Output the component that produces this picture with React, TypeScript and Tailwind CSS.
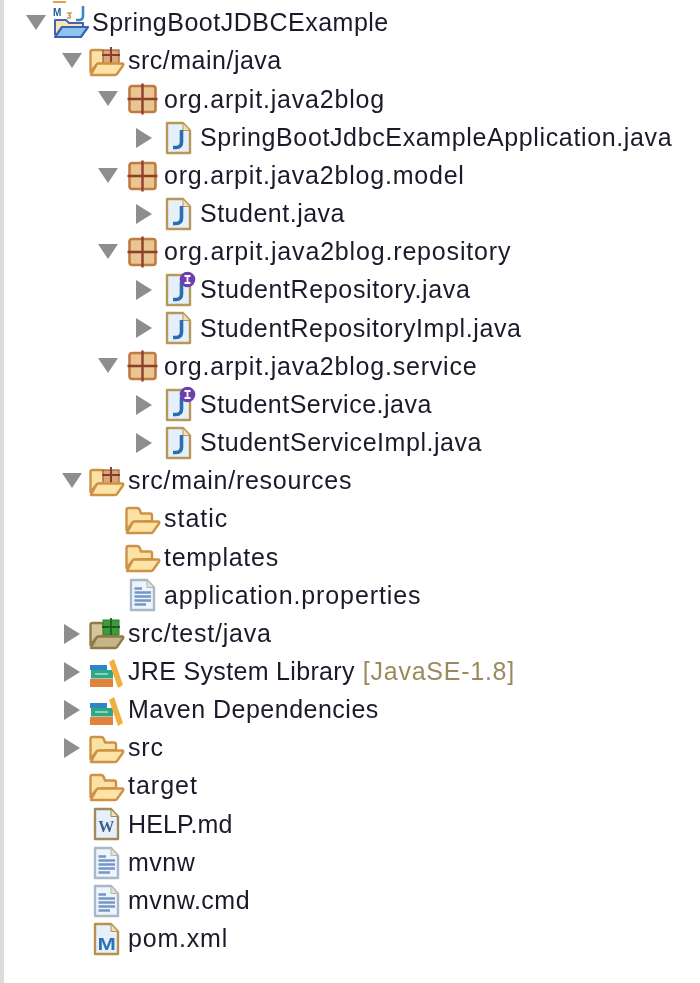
import React from "react";

const backPath = "M1.5 29 V9 Q1.5 7 3.5 7 H12 Q14 7 15 9.5 L16 12.5 H25 Q27 12.5 27 14.5 V20";
const frontPath = "M2 31.5 L8 21 Q8.5 20.5 10 20.5 H33 Q35 20.5 34 22.5 L28 31 Q27.5 32 26 32 H3 Q1.5 32 2 31.5 Z";

const FolderIcon = () => (
  <svg width="36" height="36" viewBox="0 0 36 36">
    <path d={backPath + " L8 21 L1.5 29 Z"} fill="#fbe1a4" stroke="#cd9246" strokeWidth="2.4" strokeLinejoin="round" />
    <path d={frontPath} fill="#fde3a6" stroke="#cd9246" strokeWidth="2.4" strokeLinejoin="round" />
  </svg>
);

const SourceFolder = () => (
  <svg width="36" height="36" viewBox="0 0 36 36">
    <path d={backPath + " L8 21 L1.5 29 Z"} fill="#fbe1a4" stroke="#cd9246" strokeWidth="2.4" strokeLinejoin="round" />
    <rect x="14" y="7" width="16" height="14" fill="#d9a878" stroke="#a5593a" strokeWidth="1.2" />
    <path d="M22 4 V20 M13 12 H31" stroke="#8a3b2a" strokeWidth="2" />
    <path d={frontPath} fill="#fde3a6" stroke="#cd9246" strokeWidth="2.4" strokeLinejoin="round" />
  </svg>
);

const TestFolder = () => (
  <svg width="36" height="36" viewBox="0 0 36 36">
    <path d={backPath + " L8 21 L1.5 29 Z"} fill="#d6c59a" stroke="#8f7a4a" strokeWidth="2.4" strokeLinejoin="round" />
    <rect x="14" y="4" width="16" height="15" fill="#3f9a3c" stroke="#2c7a2c" strokeWidth="1" />
    <path d="M22 2 V19 M13 11 H31" stroke="#1e5c24" strokeWidth="1.8" />
    <path d={frontPath} fill="#c7b487" stroke="#8f7a4a" strokeWidth="2.4" strokeLinejoin="round" />
  </svg>
);

const ProjectIcon = () => (
  <svg width="36" height="36" viewBox="0 0 36 36" className="overflow-visible">
    <rect x="0" y="-4" width="13" height="2" fill="#e0a050" />
    <path d="M2 30 V15 H13 L16 18 H30 V22" fill="#f6e6b4" stroke="#4563b4" strokeWidth="2" strokeLinejoin="round" />
    <path d="M2 32 L9 22 H35 L28 32 Z" fill="#8cc6ee" stroke="#3f5fb0" strokeWidth="2.2" strokeLinejoin="round" />
    <text x="0" y="11" fontFamily="'Liberation Sans', sans-serif" fontWeight="700" fontSize="10" fill="#1f5c9a">M</text>
    <path d="M14 8 H18 L16 10.5 Q18.5 11 17 13 H14" fill="none" stroke="#c69a3a" strokeWidth="1.3" />
    <path d="M30 1 V11 Q30 15 26 15 H23" fill="none" stroke="#3c86c4" strokeWidth="2.6" />
  </svg>
);

const PackageIcon = () => (
  <svg width="36" height="36" viewBox="0 0 36 36">
    <rect x="4.5" y="5" width="26" height="26" rx="2.5" fill="#e9c591" stroke="#c07a42" strokeWidth="2.6" />
    <path d="M17.5 2.5 V33.5 M2.5 18 H32.5" stroke="#8c3f2c" strokeWidth="2.4" />
  </svg>
);

const Sheet = ({ stroke, fill = "#e6f0fb", children }: { stroke: string; fill?: string; children?: React.ReactNode }) => (
  <svg width="36" height="36" viewBox="0 0 36 36" className="overflow-visible">
    <path d="M6 3 H22 L29 10.5 V33 H6 Z" fill={fill} stroke={stroke} strokeWidth="2.4" strokeLinejoin="round" />
    <path d="M22 3 V10.5 H29 Z" fill="#f3e0b8" stroke={stroke} strokeWidth="1" />
    {children}
  </svg>
);

const jPath = "M20.5 10 V22 Q20.5 27.5 15 27.5 H12";

const JavaIcon = () => (
  <Sheet stroke="#b8975a">
    <path d={jPath} fill="none" stroke="#2a6db0" strokeWidth="3.6" />
  </Sheet>
);

const InterfaceIcon = () => (
  <Sheet stroke="#b8975a">
    <path d={jPath} fill="none" stroke="#2a6db0" strokeWidth="3.6" />
    <circle cx="26.5" cy="7.5" r="7.8" fill="#6d3fae" />
    <path d="M23.5 4 H29.5 M26.5 4 V11 M23.5 11 H29.5" stroke="#ffffff" strokeWidth="1.8" />
  </Sheet>
);

const TextIcon = () => (
  <Sheet stroke="#a7b8c8" fill="#eef4fb">
    <path d="M9.5 11.5 H17 M9.5 15.5 H26 M9.5 19.5 H26 M9.5 23.5 H26 M9.5 27.5 H21" stroke="#7596c6" strokeWidth="2.4" />
  </Sheet>
);

const WordIcon = () => (
  <Sheet stroke="#a08a5c">
    <text x="17.5" y="26" textAnchor="middle" fontFamily="'Liberation Serif', serif" fontWeight="700" fontSize="16" fill="#3f5f8c">W</text>
  </Sheet>
);

const MavenIcon = () => (
  <Sheet stroke="#b8914c">
    <text x="8.5" y="29" textLength="19" lengthAdjust="spacingAndGlyphs" fontFamily="'Liberation Sans', sans-serif" fontWeight="700" fontSize="16" fill="#2c72b4">M</text>
  </Sheet>
);

const LibraryIcon = () => (
  <svg width="36" height="36" viewBox="0 0 36 36">
    <rect x="1" y="11" width="17" height="5" fill="#2d86c6" />
    <rect x="2" y="16" width="22" height="8.5" fill="#2fa784" />
    <path d="M6 20 H19" stroke="#9fe0c4" strokeWidth="1.6" />
    <rect x="1" y="25" width="23" height="8" fill="#e0823c" />
    <path d="M20 8 L25 5 L34 31 L29 34 Z" fill="#f0b040" />
  </svg>
);

type Icon = "project" | "source" | "test" | "package" | "java" | "interface" | "folder" | "text" | "lib" | "word" | "maven";

const icons: Record<Icon, React.ReactNode> = {
  project: <ProjectIcon />,
  source: <SourceFolder />,
  test: <TestFolder />,
  package: <PackageIcon />,
  java: <JavaIcon />,
  interface: <InterfaceIcon />,
  folder: <FolderIcon />,
  text: <TextIcon />,
  lib: <LibraryIcon />,
  word: <WordIcon />,
  maven: <MavenIcon />,
};

const indent = ["pl-[22px]", "pl-[58px]", "pl-[94px]", "pl-[130px]"];

type Row = { d: number; a?: "down" | "right"; i: Icon; t: string; x?: string; s?: string };

const rows: Row[] = [
  { d: 0, a: "down", i: "project", t: "SpringBootJDBCExample" },
  { d: 1, a: "down", i: "source", t: "src/main/java" },
  { d: 2, a: "down", i: "package", t: "org.arpit.java2blog", s: "tracking-[0.8px]" },
  { d: 3, a: "right", i: "java", t: "SpringBootJdbcExampleApplication.java", s: "tracking-[0.63px]" },
  { d: 2, a: "down", i: "package", t: "org.arpit.java2blog.model", s: "tracking-[0.8px]" },
  { d: 3, a: "right", i: "java", t: "Student.java" },
  { d: 2, a: "down", i: "package", t: "org.arpit.java2blog.repository", s: "tracking-[0.83px]" },
  { d: 3, a: "right", i: "interface", t: "StudentRepository.java", s: "tracking-[0.63px]" },
  { d: 3, a: "right", i: "java", t: "StudentRepositoryImpl.java", s: "tracking-[0.61px]" },
  { d: 2, a: "down", i: "package", t: "org.arpit.java2blog.service", s: "tracking-[0.8px]" },
  { d: 3, a: "right", i: "interface", t: "StudentService.java" },
  { d: 3, a: "right", i: "java", t: "StudentServiceImpl.java", s: "tracking-[0.54px]" },
  { d: 1, a: "down", i: "source", t: "src/main/resources", s: "tracking-[0.72px]" },
  { d: 2, i: "folder", t: "static", s: "tracking-[1px]" },
  { d: 2, i: "folder", t: "templates", s: "tracking-[0.72px]" },
  { d: 2, i: "text", t: "application.properties", s: "tracking-[0.9px]" },
  { d: 1, a: "right", i: "test", t: "src/test/java", s: "tracking-[0.8px]" },
  { d: 1, a: "right", i: "lib", t: "JRE System Library", x: "[JavaSE-1.8]", s: "tracking-[0.33px]" },
  { d: 1, a: "right", i: "lib", t: "Maven Dependencies" },
  { d: 1, a: "right", i: "folder", t: "src", s: "tracking-[0.8px]" },
  { d: 1, i: "folder", t: "target", s: "tracking-[1px]" },
  { d: 1, i: "word", t: "HELP.md", s: "tracking-[0.1px]" },
  { d: 1, i: "text", t: "mvnw" },
  { d: 1, i: "text", t: "mvnw.cmd" },
  { d: 1, i: "maven", t: "pom.xml", s: "tracking-[0.8px]" },
];

const Arrow = ({ a }: { a?: "down" | "right" }) => (
  <span className="flex w-[20px] shrink-0 items-center justify-center">
    {a === "down" && (
      <svg width="20" height="16" viewBox="0 0 20 16" className="-translate-y-px">
        <path d="M0 1 H20 L10 16 Z" fill="#8e8e8e" />
      </svg>
    )}
    {a === "right" && (
      <svg width="16" height="20" viewBox="0 0 16 20">
        <path d="M0 0 L16 10 L0 20 Z" fill="#8e8e8e" />
      </svg>
    )}
  </span>
);

export default function App() {
  return (
    <div className="h-[983px] w-[700px] overflow-hidden border-l-[4px] border-[#dcdcdc] bg-white pt-[4px] font-['Liberation_Sans',Arial,sans-serif] text-[25px] tracking-[0.5px] text-[#1a1a2a]">
      <div className="blur-[0.7px]">
        {rows.map((r, n) => (
          <div key={n} className={`flex h-[38.17px] items-center whitespace-nowrap ${indent[r.d]}`}>
            <Arrow a={r.a} />
            <span className="ml-[7px] flex h-[36px] w-[36px] shrink-0 items-center justify-center">{icons[r.i]}</span>
            <span className={`ml-[3px] ${r.s ?? ""}`}>{r.t}</span>
            {r.x && <span className="ml-[8px] tracking-[0.75px] text-[#9c8a5e]">{r.x}</span>}
          </div>
        ))}
      </div>
    </div>
  );
}
